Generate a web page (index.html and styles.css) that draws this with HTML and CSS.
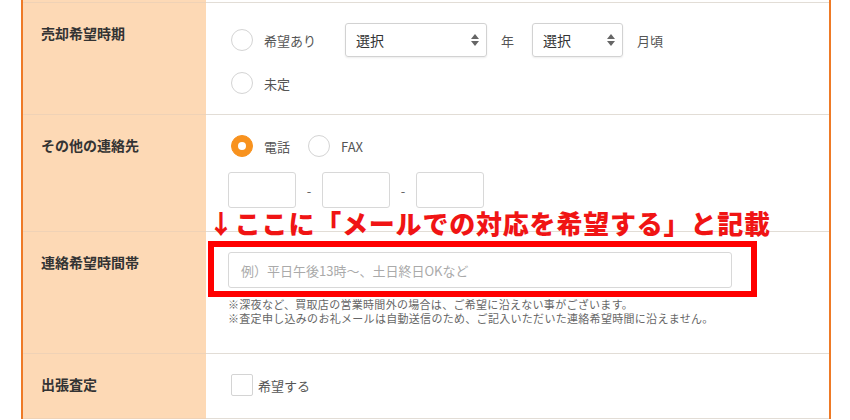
FILE: index.html
```html
<!DOCTYPE html>
<html lang="ja">
<head>
    <meta charset="UTF-8">
    <title>査定申し込みフォーム</title>
    <link rel="stylesheet" href="styles.css">
</head>
<body>

<div class="form">
    <div class="label stub"></div>
    <div class="value stub"></div>

    <div class="label">売却希望時期</div>
    <div class="value">
        <div class="line tall">
            <span class="radio"></span><span class="opt">希望あり</span>
            <div class="select wide"><span>選択</span>
                <svg class="arrows" width="8" height="12" viewBox="0 0 8 12"><path d="M4 0L8 5H0Z M4 12L0 7H8Z" fill="#666"/></svg>
            </div>
            <span class="unit">年</span>
            <div class="select narrow"><span>選択</span>
                <svg class="arrows" width="8" height="12" viewBox="0 0 8 12"><path d="M4 0L8 5H0Z M4 12L0 7H8Z" fill="#666"/></svg>
            </div>
            <span class="unit">月頃</span>
        </div>
        <div class="line second">
            <span class="radio"></span><span class="opt">未定</span>
        </div>
    </div>

    <div class="label">その他の連絡先</div>
    <div class="value contact">
        <div class="line">
            <span class="radio checked"></span><span class="opt">電話</span>
            <span class="radio"></span><span class="opt">FAX</span>
        </div>
        <div class="tel">
            <span class="box"></span><span class="dash">-</span>
            <span class="box"></span><span class="dash">-</span>
            <span class="box"></span>
        </div>
    </div>

    <div class="label">連絡希望時間帯</div>
    <div class="value marked">
        <div class="text-input">例）平日午後13時～、土日終日OKなど</div>
        <div class="note">
            <div>※深夜など、買取店の営業時間外の場合は、ご希望に沿えない事がございます。</div>
            <div>※査定申し込みのお礼メールは自動送信のため、ご記入いただいた連絡希望時間に沿えません。</div>
        </div>
        <!-- 赤字の書き込み -->
        <div class="memo">↓ここに「メールでの対応を希望する」と記載</div>
        <div class="memo-box"></div>
    </div>

    <div class="label">出張査定</div>
    <div class="value last">
        <div class="line">
            <span class="check"></span><span class="opt tight">希望する</span>
        </div>
    </div>
</div>

</body>
</html>
```

FILE: styles.css
```css
body {
    margin: 0;
    font-family: "Noto Sans CJK JP", "Liberation Sans", sans-serif;
    background: #fff;
    color: #555;
}
.form {
    display: grid;
    grid-template-columns: 183px 1fr;
    width: 806px;
    margin-left: 21px;
    border-left: 2px solid #ee7a26;
    border-right: 2px solid #ee7a26;
}
.label, .value {
    border-bottom: 1px solid #e2ddd6;
}
.label {
    background: #fdd9b5;
    padding: 20px 0 0 18px;
    font-size: 14px;
    line-height: 20px;
    font-weight: bold;
    color: #333;
    border-bottom-color: #efd2b6;
}
.value {
    padding: 20px 22px;
    font-size: 13px;
}
.stub {
    height: 2px;
    padding: 0;
}
.line {
    display: flex;
    align-items: center;
    height: 22px;
}
.line.tall {
    height: 34px;
}
.line.second {
    margin-top: 15px;
}
.radio, .check {
    width: 20px;
    height: 20px;
    border: 1px solid #d4d4d4;
    border-radius: 50%;
    margin-left: 3px;
    box-sizing: content-box;
    flex: none;
}
.radio.checked {
    background: #f8921e;
    border-color: #f8921e;
    position: relative;
}
.radio.checked::after {
    content: "";
    position: absolute;
    left: 6px;
    top: 6px;
    width: 8px;
    height: 8px;
    border-radius: 50%;
    background: #fff;
}
.check {
    border-radius: 2px;
}
.opt {
    margin: 0 15px 0 11px;
}
.opt.tight {
    margin-left: 5px;
}
.select {
    display: flex;
    align-items: center;
    justify-content: space-between;
    box-sizing: border-box;
    height: 34px;
    padding: 0 7px 0 10px;
    border: 1px solid #d2d2d2;
    border-radius: 3px;
    box-shadow: 0 1px 2px rgba(0,0,0,0.08);
    color: #333;
    font-size: 14px;
}
.select.wide {
    width: 142px;
    margin-left: 14px;
}
.select.narrow {
    width: 91px;
}
.unit {
    margin: 0 18px 0 14px;
}
.contact {
    padding-bottom: 23px;
}
.tel {
    display: flex;
    align-items: center;
    margin-top: 15px;
}
.box, .text-input {
    box-sizing: border-box;
    height: 36px;
    border: 1px solid #d8d8d8;
    border-radius: 3px;
}
.box {
    width: 68px;
}
.dash {
    width: 26px;
    text-align: center;
    color: #666;
}
.marked {
    position: relative;
    padding-bottom: 28px;
}
.last {
    padding-bottom: 22px;
}
.text-input {
    width: 504px;
    display: flex;
    align-items: center;
    padding-left: 12px;
    color: #aaa;
}
.note {
    margin-top: 9px;
    font-size: 11px;
    line-height: 14px;
    letter-spacing: 0.3px;
    color: #666;
}
.memo {
    position: absolute;
    left: 2px;
    top: -25px;
    font-size: 26px;
    line-height: 32px;
    font-weight: 900;
    letter-spacing: 0.8px;
    color: #f01414;
    white-space: nowrap;
}
.memo-box {
    position: absolute;
    left: 2px;
    top: 9px;
    width: 549px;
    height: 56px;
    box-sizing: border-box;
    border: 6px solid #f00;
}
```
